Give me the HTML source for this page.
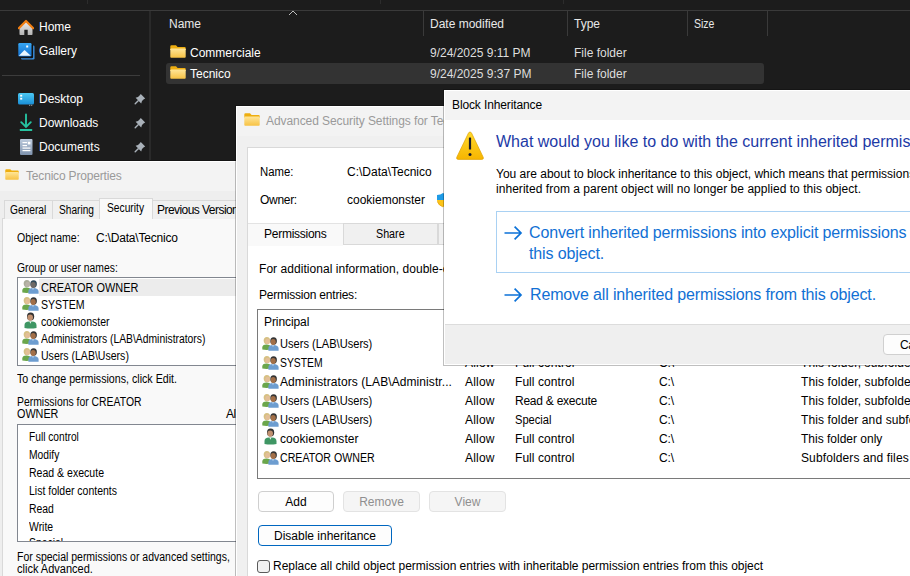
<!DOCTYPE html><html><head><meta charset="utf-8"><style>
html,body{margin:0;padding:0;width:910px;height:576px;overflow:hidden;background:#1c1c1c;}
body{position:relative;font-family:"Liberation Sans",sans-serif;}
.t{position:absolute;line-height:1;white-space:nowrap;}
</style></head><body>
<div style="position:absolute;left:0px;top:10px;width:910px;height:1px;background:#3a3a3a"></div>
<div style="position:absolute;left:87px;top:0px;width:1px;height:4px;background:#2c2c2c"></div>
<div style="position:absolute;left:380px;top:0px;width:1px;height:4px;background:#2c2c2c"></div>
<div style="position:absolute;left:563px;top:0px;width:1px;height:4px;background:#2c2c2c"></div>
<div style="position:absolute;left:149px;top:11px;width:2px;height:150px;background:#2a2a2a"></div>
<div class="t " style="left:39px;top:21px;font-size:12px;color:#ffffff;">Home</div>
<div class="t " style="left:39px;top:45px;font-size:12px;color:#ffffff;">Gallery</div>
<div style="position:absolute;left:2px;top:75px;width:138px;height:1px;background:#3c3c3c"></div>
<div class="t " style="left:39px;top:93px;font-size:12px;color:#ffffff;">Desktop</div>
<div class="t " style="left:39px;top:117px;font-size:12px;color:#ffffff;">Downloads</div>
<div class="t " style="left:39px;top:141px;font-size:12px;color:#ffffff;">Documents</div>
<svg style="position:absolute;left:18px;top:19px" width="16" height="17" viewBox="0 0 16 17" preserveAspectRatio="none"><defs><linearGradient id="hg" x1="0" y1="0" x2="0" y2="1"><stop offset="0" stop-color="#ececec"/><stop offset="1" stop-color="#b4b4b4"/></linearGradient></defs><path d="M1.5 8.5 L8 2.5 L14.5 8.5 V15.2 Q14.5 16 13.7 16 H9.7 V10.8 H6.3 V16 H2.3 Q1.5 16 1.5 15.2Z" fill="url(#hg)"/><path d="M0.8 9.2 L8 2 L15.2 9.2" stroke="#f07e12" stroke-width="2.2" fill="none" stroke-linejoin="round" stroke-linecap="round"/></svg>
<svg style="position:absolute;left:18px;top:42px" width="17" height="18" viewBox="0 0 17 18" preserveAspectRatio="none"><rect x="3" y="3.5" width="13.5" height="14" rx="1.2" fill="#3a8fe0"/><rect x="1.6" y="2.2" width="13.5" height="14" rx="1.2" fill="#111"/><defs><linearGradient id="gg" x1="0" y1="0" x2="0" y2="1"><stop offset="0" stop-color="#36a6f4"/><stop offset="1" stop-color="#1470d0"/></linearGradient></defs><rect x="0.3" y="1" width="13.2" height="13.4" rx="1.2" fill="url(#gg)"/><path d="M0.8 13.8 L6.5 8 L12.8 13.8Z" fill="#eaf6ff"/><rect x="8.2" y="3.5" width="2" height="2" fill="#fff"/></svg>
<svg style="position:absolute;left:18px;top:92px" width="17" height="14" viewBox="0 0 17 14" preserveAspectRatio="none"><defs><linearGradient id="dg" x1="0" y1="0" x2="0" y2="1"><stop offset="0" stop-color="#4cc8f2"/><stop offset="1" stop-color="#1a8ed6"/></linearGradient></defs><rect x="0" y="1" width="16" height="11.5" rx="1.5" fill="url(#dg)"/><rect x="2.2" y="2.8" width="2" height="1.8" fill="#fff"/><rect x="2.2" y="5.8" width="2" height="1.8" fill="#fff"/><rect x="11.2" y="12.8" width="1" height="1" fill="#bbb"/><rect x="13.2" y="12.8" width="1" height="1" fill="#bbb"/></svg>
<svg style="position:absolute;left:19px;top:113px" width="14" height="19" viewBox="0 0 14 19" preserveAspectRatio="none"><path d="M7 1.5 V14 M2.2 9.2 L7 14 L11.8 9.2" stroke="#26c2a0" stroke-width="1.9" fill="none" stroke-linecap="round"/><rect x="0.8" y="16" width="12.4" height="2" rx="0.6" fill="#26c2a0"/></svg>
<svg style="position:absolute;left:20px;top:139px" width="13" height="17" viewBox="0 0 13 17" preserveAspectRatio="none"><defs><linearGradient id="docg" x1="0" y1="0" x2="0" y2="1"><stop offset="0" stop-color="#bccbdd"/><stop offset="1" stop-color="#7f93ad"/></linearGradient></defs><rect x="0" y="0" width="12.5" height="16" rx="1" fill="url(#docg)"/><rect x="2.5" y="3" width="4.5" height="1.2" fill="#fff"/><rect x="7.8" y="2.8" width="2.6" height="2.6" fill="#fff"/><rect x="2.5" y="6" width="4.5" height="1.2" fill="#fff"/><rect x="2.5" y="8.5" width="7.9" height="1.2" fill="#fff"/><rect x="2.5" y="11" width="7.9" height="1.2" fill="#fff"/></svg>
<svg style="position:absolute;left:134px;top:93px" width="12" height="12" viewBox="0 0 12 12" preserveAspectRatio="none"><path d="M6.8 1 L11.2 5.4 L9.8 6.2 L8 8 L7.2 10.4 L1.6 4.8 L4 4 L5.8 2.2 Z" fill="#a9b1b9"/><path d="M4.2 7.8 L1.2 10.8" stroke="#a9b1b9" stroke-width="1.4" stroke-linecap="round"/></svg>
<svg style="position:absolute;left:134px;top:117px" width="12" height="12" viewBox="0 0 12 12" preserveAspectRatio="none"><path d="M6.8 1 L11.2 5.4 L9.8 6.2 L8 8 L7.2 10.4 L1.6 4.8 L4 4 L5.8 2.2 Z" fill="#a9b1b9"/><path d="M4.2 7.8 L1.2 10.8" stroke="#a9b1b9" stroke-width="1.4" stroke-linecap="round"/></svg>
<svg style="position:absolute;left:134px;top:141px" width="12" height="12" viewBox="0 0 12 12" preserveAspectRatio="none"><path d="M6.8 1 L11.2 5.4 L9.8 6.2 L8 8 L7.2 10.4 L1.6 4.8 L4 4 L5.8 2.2 Z" fill="#a9b1b9"/><path d="M4.2 7.8 L1.2 10.8" stroke="#a9b1b9" stroke-width="1.4" stroke-linecap="round"/></svg>
<div class="t " style="left:169px;top:18px;font-size:12px;color:#e8e8e8;">Name</div>
<svg style="position:absolute;left:288px;top:10px" width="10" height="6" viewBox="0 0 10 6" preserveAspectRatio="none"><path d="M1 5 L5 1 L9 5" stroke="#bdbdbd" stroke-width="1" fill="none"/></svg>
<div style="position:absolute;left:423px;top:11px;width:1px;height:25px;background:#3a3a3a"></div>
<div style="position:absolute;left:567px;top:11px;width:1px;height:25px;background:#3a3a3a"></div>
<div style="position:absolute;left:687px;top:11px;width:1px;height:25px;background:#3a3a3a"></div>
<div style="position:absolute;left:767px;top:11px;width:1px;height:25px;background:#3a3a3a"></div>
<div class="t " style="left:430px;top:18px;font-size:12px;color:#e8e8e8;">Date modified</div>
<div class="t " style="left:574px;top:18px;font-size:12px;color:#e8e8e8;">Type</div>
<div class="t " style="left:694px;top:18px;font-size:12px;color:#e8e8e8;transform:scaleX(0.8739);transform-origin:0 0;">Size</div>
<div style="position:absolute;left:166px;top:63px;width:598px;height:21px;background:#333333;border-radius:3px"></div>
<svg style="position:absolute;left:170px;top:45px" width="16" height="13" viewBox="0 0 16 13" preserveAspectRatio="none"><defs><linearGradient id="fg" x1="0" y1="0" x2="0" y2="1"><stop offset="0" stop-color="#ffe69a"/><stop offset="1" stop-color="#f7c244"/></linearGradient></defs><path d="M0.3 1.5 Q0.3 0.3 1.5 0.3 H6 L7.6 1.9 H14.6 Q15.7 1.9 15.7 3 V5 H0.3Z" fill="#eeae10"/><rect x="0.3" y="3.4" width="15.4" height="9.3" rx="0.9" fill="url(#fg)"/></svg>
<div class="t " style="left:190px;top:47px;font-size:12px;color:#ffffff;">Commerciale</div>
<div class="t " style="left:430px;top:47px;font-size:12px;color:#dedede;">9/24/2025 9:11 PM</div>
<div class="t " style="left:574px;top:47px;font-size:12px;color:#dedede;">File folder</div>
<svg style="position:absolute;left:170px;top:66px" width="16" height="13" viewBox="0 0 16 13" preserveAspectRatio="none"><defs><linearGradient id="fg" x1="0" y1="0" x2="0" y2="1"><stop offset="0" stop-color="#ffe69a"/><stop offset="1" stop-color="#f7c244"/></linearGradient></defs><path d="M0.3 1.5 Q0.3 0.3 1.5 0.3 H6 L7.6 1.9 H14.6 Q15.7 1.9 15.7 3 V5 H0.3Z" fill="#eeae10"/><rect x="0.3" y="3.4" width="15.4" height="9.3" rx="0.9" fill="url(#fg)"/></svg>
<div class="t " style="left:190px;top:68px;font-size:12px;color:#ffffff;">Tecnico</div>
<div class="t " style="left:430px;top:68px;font-size:12px;color:#dedede;">9/24/2025 9:37 PM</div>
<div class="t " style="left:574px;top:68px;font-size:12px;color:#dedede;">File folder</div>
<div style="position:absolute;left:0px;top:160px;width:236px;height:1px;background:#141414"></div>
<div style="position:absolute;left:0px;top:161px;width:236px;height:415px;background:#eeeeee;border-top:1px solid #fff;box-sizing:border-box"></div>
<div style="position:absolute;left:0px;top:162px;width:236px;height:29px;background:#f3f3f3"></div>
<svg style="position:absolute;left:5px;top:169px" width="14" height="11" viewBox="0 0 16 13" preserveAspectRatio="none"><defs><linearGradient id="fg" x1="0" y1="0" x2="0" y2="1"><stop offset="0" stop-color="#ffe69a"/><stop offset="1" stop-color="#f7c244"/></linearGradient></defs><path d="M0.3 1.5 Q0.3 0.3 1.5 0.3 H6 L7.6 1.9 H14.6 Q15.7 1.9 15.7 3 V5 H0.3Z" fill="#eeae10"/><rect x="0.3" y="3.4" width="15.4" height="9.3" rx="0.9" fill="url(#fg)"/></svg>
<div class="t " style="left:26px;top:170px;font-size:12px;color:#9a9a9a;letter-spacing:-0.178px;">Tecnico Properties</div>
<div style="position:absolute;left:2px;top:218px;width:240px;height:360px;background:#f9f9f9;border:1px solid #d9d9d9;box-sizing:border-box"></div>
<div style="position:absolute;left:4px;top:200px;width:49px;height:19px;background:#f0f0f0;border:1px solid #d9d9d9;border-bottom:none;box-sizing:border-box"></div>
<div style="position:absolute;left:52px;top:200px;width:48px;height:19px;background:#f0f0f0;border:1px solid #d9d9d9;border-bottom:none;box-sizing:border-box"></div>
<div style="position:absolute;left:152px;top:200px;width:90px;height:19px;background:#f0f0f0;border:1px solid #d9d9d9;border-bottom:none;box-sizing:border-box"></div>
<div style="position:absolute;left:99px;top:198px;width:54px;height:21px;background:#f9f9f9;border:1px solid #d9d9d9;border-bottom:none;box-sizing:border-box"></div>
<div class="t " style="left:10px;top:204px;font-size:12px;color:#000;transform:scaleX(0.8503);transform-origin:0 0;">General</div>
<div class="t " style="left:59px;top:204px;font-size:12px;color:#000;transform:scaleX(0.8438);transform-origin:0 0;">Sharing</div>
<div class="t " style="left:107px;top:202px;font-size:12px;color:#000;transform:scaleX(0.8536);transform-origin:0 0;">Security</div>
<div class="t " style="left:157px;top:204px;font-size:12px;color:#000;letter-spacing:-0.55px;">Previous Versions</div>
<div class="t " style="left:17px;top:232px;font-size:12px;color:#000;transform:scaleX(0.8772);transform-origin:0 0;">Object name:</div>
<div class="t " style="left:96px;top:232px;font-size:12px;color:#000;letter-spacing:-0.200px;">C:\Data\Tecnico</div>
<div class="t " style="left:17px;top:262px;font-size:12px;color:#000;transform:scaleX(0.8636);transform-origin:0 0;">Group or user names:</div>
<div style="position:absolute;left:17px;top:277px;width:230px;height:89px;background:#fff;border:1px solid #828790;box-sizing:border-box"></div>
<div style="position:absolute;left:39px;top:279px;width:200px;height:17px;background:#ececec"></div>
<svg style="position:absolute;left:22px;top:279px" width="17" height="15" viewBox="0 0 17 15" preserveAspectRatio="none"><ellipse cx="4.9" cy="4.6" rx="3.2" ry="3.6" fill="#a9ab9a"/><ellipse cx="5.6" cy="5.4" rx="2.3" ry="2.7" fill="#b9b3a8"/><path d="M0.3 13.6 V11.6 Q0.3 8.4 4.4 8.4 Q8.8 8.4 8.8 11.6 V13.6 Q4.5 14.2 0.3 13.6Z" fill="#6ba64b"/><ellipse cx="11.6" cy="4.9" rx="3.3" ry="3.7" fill="#2f4a5a"/><ellipse cx="11.2" cy="6" rx="2.6" ry="2.9" fill="#6f6a66"/><path d="M6.4 14.8 V12.2 Q6.4 9 11 9 Q16.6 9 16.6 12.6 V14.8Z" fill="#6d9dd0"/><path d="M10.2 9.2 L11 11 L11.8 9.2Z" fill="#e8f0f8"/></svg>
<div class="t " style="left:41px;top:282px;font-size:12px;color:#000;transform:scaleX(0.9103);transform-origin:0 0;">CREATOR OWNER</div>
<svg style="position:absolute;left:22px;top:296px" width="17" height="15" viewBox="0 0 17 15" preserveAspectRatio="none"><ellipse cx="4.9" cy="4.6" rx="3.2" ry="3.6" fill="#d6c083"/><ellipse cx="5.6" cy="5.4" rx="2.3" ry="2.7" fill="#e3bf98"/><path d="M0.3 13.6 V11.6 Q0.3 8.4 4.4 8.4 Q8.8 8.4 8.8 11.6 V13.6 Q4.5 14.2 0.3 13.6Z" fill="#6ba64b"/><ellipse cx="11.6" cy="4.9" rx="3.3" ry="3.7" fill="#353535"/><ellipse cx="11.2" cy="6" rx="2.6" ry="2.9" fill="#a26f48"/><path d="M6.4 14.8 V12.2 Q6.4 9 11 9 Q16.6 9 16.6 12.6 V14.8Z" fill="#6d9dd0"/><path d="M10.2 9.2 L11 11 L11.8 9.2Z" fill="#e8f0f8"/></svg>
<div class="t " style="left:41px;top:299px;font-size:12px;color:#000;transform:scaleX(0.8816);transform-origin:0 0;">SYSTEM</div>
<svg style="position:absolute;left:22px;top:312px" width="17" height="17" viewBox="0 0 17 17" preserveAspectRatio="none"><ellipse cx="8.6" cy="4.4" rx="3.6" ry="3.9" fill="#333"/><ellipse cx="8.2" cy="5.6" rx="2.8" ry="3.1" fill="#c09070"/><path d="M2.5 16 V13 Q2.5 9.6 7 9.4 H10 Q14.5 9.6 14.5 13.4 V16 Q8.5 17 2.5 16Z" fill="#3f9664"/><path d="M7.4 9.6 L8.4 11.8 L9.4 9.6Z" fill="#e8f4ec"/></svg>
<div class="t " style="left:41px;top:316px;font-size:12px;color:#000;transform:scaleX(0.8791);transform-origin:0 0;">cookiemonster</div>
<svg style="position:absolute;left:22px;top:330px" width="17" height="15" viewBox="0 0 17 15" preserveAspectRatio="none"><ellipse cx="4.9" cy="4.6" rx="3.2" ry="3.6" fill="#d6c083"/><ellipse cx="5.6" cy="5.4" rx="2.3" ry="2.7" fill="#e3bf98"/><path d="M0.3 13.6 V11.6 Q0.3 8.4 4.4 8.4 Q8.8 8.4 8.8 11.6 V13.6 Q4.5 14.2 0.3 13.6Z" fill="#6ba64b"/><ellipse cx="11.6" cy="4.9" rx="3.3" ry="3.7" fill="#353535"/><ellipse cx="11.2" cy="6" rx="2.6" ry="2.9" fill="#a26f48"/><path d="M6.4 14.8 V12.2 Q6.4 9 11 9 Q16.6 9 16.6 12.6 V14.8Z" fill="#6d9dd0"/><path d="M10.2 9.2 L11 11 L11.8 9.2Z" fill="#e8f0f8"/></svg>
<div class="t " style="left:41px;top:333px;font-size:12px;color:#000;transform:scaleX(0.8620);transform-origin:0 0;">Administrators (LAB\Administrators)</div>
<svg style="position:absolute;left:22px;top:347px" width="17" height="15" viewBox="0 0 17 15" preserveAspectRatio="none"><ellipse cx="4.9" cy="4.6" rx="3.2" ry="3.6" fill="#d6c083"/><ellipse cx="5.6" cy="5.4" rx="2.3" ry="2.7" fill="#e3bf98"/><path d="M0.3 13.6 V11.6 Q0.3 8.4 4.4 8.4 Q8.8 8.4 8.8 11.6 V13.6 Q4.5 14.2 0.3 13.6Z" fill="#6ba64b"/><ellipse cx="11.6" cy="4.9" rx="3.3" ry="3.7" fill="#353535"/><ellipse cx="11.2" cy="6" rx="2.6" ry="2.9" fill="#a26f48"/><path d="M6.4 14.8 V12.2 Q6.4 9 11 9 Q16.6 9 16.6 12.6 V14.8Z" fill="#6d9dd0"/><path d="M10.2 9.2 L11 11 L11.8 9.2Z" fill="#e8f0f8"/></svg>
<div class="t " style="left:41px;top:350px;font-size:12px;color:#000;transform:scaleX(0.8789);transform-origin:0 0;">Users (LAB\Users)</div>
<div class="t " style="left:17px;top:373px;font-size:12px;color:#000;transform:scaleX(0.8885);transform-origin:0 0;">To change permissions, click Edit.</div>
<div class="t " style="left:17px;top:396px;font-size:12px;color:#000;transform:scaleX(0.8671);transform-origin:0 0;">Permissions for CREATOR</div>
<div class="t " style="left:17px;top:408px;font-size:12px;color:#000;transform:scaleX(0.9001);transform-origin:0 0;">OWNER</div>
<div class="t " style="left:226px;top:408px;font-size:12px;color:#000;letter-spacing:-0.4px;">Allow</div>
<div style="position:absolute;left:17px;top:424px;width:230px;height:118px;background:#fff;border:1px solid #828790;box-sizing:border-box"></div>
<div style="position:absolute;left:0;top:0;width:910px;height:576px;clip-path:inset(425px 0 35px 18px)">
<div class="t " style="left:29px;top:431px;font-size:12px;color:#000;transform:scaleX(0.8486);transform-origin:0 0;">Full control</div>
<div class="t " style="left:29px;top:449px;font-size:12px;color:#000;transform:scaleX(0.8573);transform-origin:0 0;">Modify</div>
<div class="t " style="left:29px;top:467px;font-size:12px;color:#000;transform:scaleX(0.8783);transform-origin:0 0;">Read &amp; execute</div>
<div class="t " style="left:29px;top:485px;font-size:12px;color:#000;transform:scaleX(0.8737);transform-origin:0 0;">List folder contents</div>
<div class="t " style="left:29px;top:503px;font-size:12px;color:#000;transform:scaleX(0.8680);transform-origin:0 0;">Read</div>
<div class="t " style="left:29px;top:521px;font-size:12px;color:#000;transform:scaleX(0.8676);transform-origin:0 0;">Write</div>
<div class="t " style="left:29px;top:537px;font-size:12px;color:#000;transform:scaleX(0.8639);transform-origin:0 0;">Special</div>
</div>
<div class="t " style="left:17px;top:551px;font-size:12px;color:#000;transform:scaleX(0.8741);transform-origin:0 0;">For special permissions or advanced settings,</div>
<div class="t " style="left:17px;top:563px;font-size:12px;color:#000;transform:scaleX(0.9176);transform-origin:0 0;">click Advanced.</div>
<div style="position:absolute;left:235px;top:105px;width:700px;height:480px;background:#f0f0f0;border-left:1px solid rgba(0,0,0,0.25);border-top:1px solid rgba(0,0,0,0.25);box-sizing:border-box;background-clip:padding-box"></div>
<div style="position:absolute;left:236px;top:106px;width:700px;height:480px;background:#f0f0f0;border-left:1px solid #fff;border-top:1px solid #fff;box-sizing:border-box"></div>
<div style="position:absolute;left:237px;top:107px;width:700px;height:29px;background:#f3f3f3"></div>
<svg style="position:absolute;left:244px;top:113px" width="16" height="13" viewBox="0 0 16 13" preserveAspectRatio="none"><defs><linearGradient id="fg" x1="0" y1="0" x2="0" y2="1"><stop offset="0" stop-color="#ffe69a"/><stop offset="1" stop-color="#f7c244"/></linearGradient></defs><path d="M0.3 1.5 Q0.3 0.3 1.5 0.3 H6 L7.6 1.9 H14.6 Q15.7 1.9 15.7 3 V5 H0.3Z" fill="#eeae10"/><rect x="0.3" y="3.4" width="15.4" height="9.3" rx="0.9" fill="url(#fg)"/></svg>
<div class="t " style="left:266px;top:115px;font-size:12px;color:#9a9a9a;letter-spacing:-0.08px;">Advanced Security Settings for Tecnico</div>
<div style="position:absolute;left:247px;top:147px;width:700px;height:440px;background:#fff;border:1px solid #d9d9d9;box-sizing:border-box"></div>
<div class="t " style="left:260px;top:166px;font-size:12px;color:#000;transform:scaleX(0.9450);transform-origin:0 0;">Name:</div>
<div class="t " style="left:347px;top:166px;font-size:12px;color:#000;">C:\Data\Tecnico</div>
<div class="t " style="left:260px;top:194px;font-size:12px;color:#000;letter-spacing:-0.296px;">Owner:</div>
<div class="t " style="left:347px;top:194px;font-size:12px;color:#000;">cookiemonster</div>
<svg style="position:absolute;left:437px;top:192px" width="12" height="16" viewBox="0 0 12 16" preserveAspectRatio="none"><path d="M0 3 Q3.5 3 6 1 Q8.5 3 12 3 V8 H0Z" fill="#1f9be6"/><path d="M0 8 H12 Q12 13 6 15 Q0 13 0 8Z" fill="#fcc419"/><path d="M6 15 Q2 13.5 0.3 9.5" stroke="#e09a10" stroke-width="0.6" fill="none"/></svg>
<div style="position:absolute;left:248px;top:244px;width:700px;height:1px;background:#d9d9d9"></div>
<div style="position:absolute;left:343px;top:223px;width:95px;height:22px;background:#f0f0f0;border:1px solid #d9d9d9;box-sizing:border-box"></div>
<div style="position:absolute;left:438px;top:223px;width:95px;height:22px;background:#f0f0f0;border:1px solid #d9d9d9;box-sizing:border-box"></div>
<div style="position:absolute;left:248px;top:223px;width:95px;height:22px;background:#f9f9f9;border-top:1px solid #e3e3e3"></div>
<div class="t " style="left:264px;top:228px;font-size:12px;color:#000;letter-spacing:-0.259px;">Permissions</div>
<div class="t " style="left:376px;top:228px;font-size:12px;color:#000;transform:scaleX(0.8932);transform-origin:0 0;">Share</div>
<div class="t " style="left:259px;top:263px;font-size:12px;color:#000;letter-spacing:0.05px;">For additional information, double-click a permission entry.</div>
<div class="t " style="left:259px;top:289px;font-size:12px;color:#000;letter-spacing:-0.212px;">Permission entries:</div>
<div style="position:absolute;left:257px;top:309px;width:700px;height:170px;background:#fff;border:1px solid #7a7a7a;box-sizing:border-box"></div>
<div class="t " style="left:264px;top:316px;font-size:12px;color:#000;letter-spacing:-0.091px;">Principal</div>
<svg style="position:absolute;left:262px;top:336px" width="17" height="15" viewBox="0 0 17 15" preserveAspectRatio="none"><ellipse cx="4.9" cy="4.6" rx="3.2" ry="3.6" fill="#d6c083"/><ellipse cx="5.6" cy="5.4" rx="2.3" ry="2.7" fill="#e3bf98"/><path d="M0.3 13.6 V11.6 Q0.3 8.4 4.4 8.4 Q8.8 8.4 8.8 11.6 V13.6 Q4.5 14.2 0.3 13.6Z" fill="#6ba64b"/><ellipse cx="11.6" cy="4.9" rx="3.3" ry="3.7" fill="#353535"/><ellipse cx="11.2" cy="6" rx="2.6" ry="2.9" fill="#a26f48"/><path d="M6.4 14.8 V12.2 Q6.4 9 11 9 Q16.6 9 16.6 12.6 V14.8Z" fill="#6d9dd0"/><path d="M10.2 9.2 L11 11 L11.8 9.2Z" fill="#e8f0f8"/></svg>
<div class="t " style="left:280px;top:338px;font-size:12px;color:#000;transform:scaleX(0.9229);transform-origin:0 0;">Users (LAB\Users)</div>
<div class="t " style="left:465px;top:338px;font-size:12px;color:#000;letter-spacing:0.205px;">Allow</div>
<div class="t " style="left:515px;top:338px;font-size:12px;color:#000;letter-spacing:0.059px;">Full control</div>
<div class="t " style="left:659px;top:338px;font-size:12px;color:#000;letter-spacing:-0.078px;">C:\</div>
<div class="t " style="left:801px;top:338px;font-size:12px;color:#000;letter-spacing:0.12px;">This folder, subfolders and files</div>
<svg style="position:absolute;left:262px;top:355px" width="17" height="15" viewBox="0 0 17 15" preserveAspectRatio="none"><ellipse cx="4.9" cy="4.6" rx="3.2" ry="3.6" fill="#d6c083"/><ellipse cx="5.6" cy="5.4" rx="2.3" ry="2.7" fill="#e3bf98"/><path d="M0.3 13.6 V11.6 Q0.3 8.4 4.4 8.4 Q8.8 8.4 8.8 11.6 V13.6 Q4.5 14.2 0.3 13.6Z" fill="#6ba64b"/><ellipse cx="11.6" cy="4.9" rx="3.3" ry="3.7" fill="#353535"/><ellipse cx="11.2" cy="6" rx="2.6" ry="2.9" fill="#a26f48"/><path d="M6.4 14.8 V12.2 Q6.4 9 11 9 Q16.6 9 16.6 12.6 V14.8Z" fill="#6d9dd0"/><path d="M10.2 9.2 L11 11 L11.8 9.2Z" fill="#e8f0f8"/></svg>
<div class="t " style="left:280px;top:357px;font-size:12px;color:#000;transform:scaleX(0.8654);transform-origin:0 0;">SYSTEM</div>
<div class="t " style="left:465px;top:357px;font-size:12px;color:#000;letter-spacing:0.205px;">Allow</div>
<div class="t " style="left:515px;top:357px;font-size:12px;color:#000;letter-spacing:0.059px;">Full control</div>
<div class="t " style="left:659px;top:357px;font-size:12px;color:#000;letter-spacing:-0.078px;">C:\</div>
<div class="t " style="left:801px;top:357px;font-size:12px;color:#000;letter-spacing:0.12px;">This folder, subfolders and files</div>
<svg style="position:absolute;left:262px;top:374px" width="17" height="15" viewBox="0 0 17 15" preserveAspectRatio="none"><ellipse cx="4.9" cy="4.6" rx="3.2" ry="3.6" fill="#d6c083"/><ellipse cx="5.6" cy="5.4" rx="2.3" ry="2.7" fill="#e3bf98"/><path d="M0.3 13.6 V11.6 Q0.3 8.4 4.4 8.4 Q8.8 8.4 8.8 11.6 V13.6 Q4.5 14.2 0.3 13.6Z" fill="#6ba64b"/><ellipse cx="11.6" cy="4.9" rx="3.3" ry="3.7" fill="#353535"/><ellipse cx="11.2" cy="6" rx="2.6" ry="2.9" fill="#a26f48"/><path d="M6.4 14.8 V12.2 Q6.4 9 11 9 Q16.6 9 16.6 12.6 V14.8Z" fill="#6d9dd0"/><path d="M10.2 9.2 L11 11 L11.8 9.2Z" fill="#e8f0f8"/></svg>
<div class="t " style="left:280px;top:376px;font-size:12px;color:#000;letter-spacing:0.082px;">Administrators (LAB\Administr...</div>
<div class="t " style="left:465px;top:376px;font-size:12px;color:#000;letter-spacing:0.205px;">Allow</div>
<div class="t " style="left:515px;top:376px;font-size:12px;color:#000;letter-spacing:0.059px;">Full control</div>
<div class="t " style="left:659px;top:376px;font-size:12px;color:#000;letter-spacing:-0.078px;">C:\</div>
<div class="t " style="left:801px;top:376px;font-size:12px;color:#000;letter-spacing:0.12px;">This folder, subfolders and files</div>
<svg style="position:absolute;left:262px;top:393px" width="17" height="15" viewBox="0 0 17 15" preserveAspectRatio="none"><ellipse cx="4.9" cy="4.6" rx="3.2" ry="3.6" fill="#d6c083"/><ellipse cx="5.6" cy="5.4" rx="2.3" ry="2.7" fill="#e3bf98"/><path d="M0.3 13.6 V11.6 Q0.3 8.4 4.4 8.4 Q8.8 8.4 8.8 11.6 V13.6 Q4.5 14.2 0.3 13.6Z" fill="#6ba64b"/><ellipse cx="11.6" cy="4.9" rx="3.3" ry="3.7" fill="#353535"/><ellipse cx="11.2" cy="6" rx="2.6" ry="2.9" fill="#a26f48"/><path d="M6.4 14.8 V12.2 Q6.4 9 11 9 Q16.6 9 16.6 12.6 V14.8Z" fill="#6d9dd0"/><path d="M10.2 9.2 L11 11 L11.8 9.2Z" fill="#e8f0f8"/></svg>
<div class="t " style="left:280px;top:395px;font-size:12px;color:#000;transform:scaleX(0.9229);transform-origin:0 0;">Users (LAB\Users)</div>
<div class="t " style="left:465px;top:395px;font-size:12px;color:#000;letter-spacing:0.205px;">Allow</div>
<div class="t " style="left:515px;top:395px;font-size:12px;color:#000;letter-spacing:-0.242px;">Read &amp; execute</div>
<div class="t " style="left:659px;top:395px;font-size:12px;color:#000;letter-spacing:-0.078px;">C:\</div>
<div class="t " style="left:801px;top:395px;font-size:12px;color:#000;letter-spacing:0.12px;">This folder, subfolders and files</div>
<svg style="position:absolute;left:262px;top:412px" width="17" height="15" viewBox="0 0 17 15" preserveAspectRatio="none"><ellipse cx="4.9" cy="4.6" rx="3.2" ry="3.6" fill="#d6c083"/><ellipse cx="5.6" cy="5.4" rx="2.3" ry="2.7" fill="#e3bf98"/><path d="M0.3 13.6 V11.6 Q0.3 8.4 4.4 8.4 Q8.8 8.4 8.8 11.6 V13.6 Q4.5 14.2 0.3 13.6Z" fill="#6ba64b"/><ellipse cx="11.6" cy="4.9" rx="3.3" ry="3.7" fill="#353535"/><ellipse cx="11.2" cy="6" rx="2.6" ry="2.9" fill="#a26f48"/><path d="M6.4 14.8 V12.2 Q6.4 9 11 9 Q16.6 9 16.6 12.6 V14.8Z" fill="#6d9dd0"/><path d="M10.2 9.2 L11 11 L11.8 9.2Z" fill="#e8f0f8"/></svg>
<div class="t " style="left:280px;top:414px;font-size:12px;color:#000;transform:scaleX(0.9229);transform-origin:0 0;">Users (LAB\Users)</div>
<div class="t " style="left:465px;top:414px;font-size:12px;color:#000;letter-spacing:0.205px;">Allow</div>
<div class="t " style="left:515px;top:414px;font-size:12px;color:#000;transform:scaleX(0.9274);transform-origin:0 0;">Special</div>
<div class="t " style="left:659px;top:414px;font-size:12px;color:#000;letter-spacing:-0.078px;">C:\</div>
<div class="t " style="left:801px;top:414px;font-size:12px;color:#000;letter-spacing:0.12px;">This folder and subfolders</div>
<svg style="position:absolute;left:262px;top:428px" width="17" height="17" viewBox="0 0 17 17" preserveAspectRatio="none"><ellipse cx="8.6" cy="4.4" rx="3.6" ry="3.9" fill="#333"/><ellipse cx="8.2" cy="5.6" rx="2.8" ry="3.1" fill="#c09070"/><path d="M2.5 16 V13 Q2.5 9.6 7 9.4 H10 Q14.5 9.6 14.5 13.4 V16 Q8.5 17 2.5 16Z" fill="#3f9664"/><path d="M7.4 9.6 L8.4 11.8 L9.4 9.6Z" fill="#e8f4ec"/></svg>
<div class="t " style="left:280px;top:433px;font-size:12px;color:#000;letter-spacing:0.036px;">cookiemonster</div>
<div class="t " style="left:465px;top:433px;font-size:12px;color:#000;letter-spacing:0.205px;">Allow</div>
<div class="t " style="left:515px;top:433px;font-size:12px;color:#000;letter-spacing:0.059px;">Full control</div>
<div class="t " style="left:659px;top:433px;font-size:12px;color:#000;letter-spacing:-0.078px;">C:\</div>
<div class="t " style="left:801px;top:433px;font-size:12px;color:#000;letter-spacing:0px;">This folder only</div>
<svg style="position:absolute;left:262px;top:450px" width="17" height="15" viewBox="0 0 17 15" preserveAspectRatio="none"><ellipse cx="4.9" cy="4.6" rx="3.2" ry="3.6" fill="#d6c083"/><ellipse cx="5.6" cy="5.4" rx="2.3" ry="2.7" fill="#e3bf98"/><path d="M0.3 13.6 V11.6 Q0.3 8.4 4.4 8.4 Q8.8 8.4 8.8 11.6 V13.6 Q4.5 14.2 0.3 13.6Z" fill="#6ba64b"/><ellipse cx="11.6" cy="4.9" rx="3.3" ry="3.7" fill="#353535"/><ellipse cx="11.2" cy="6" rx="2.6" ry="2.9" fill="#a26f48"/><path d="M6.4 14.8 V12.2 Q6.4 9 11 9 Q16.6 9 16.6 12.6 V14.8Z" fill="#6d9dd0"/><path d="M10.2 9.2 L11 11 L11.8 9.2Z" fill="#e8f0f8"/></svg>
<div class="t " style="left:280px;top:452px;font-size:12px;color:#000;transform:scaleX(0.8859);transform-origin:0 0;">CREATOR OWNER</div>
<div class="t " style="left:465px;top:452px;font-size:12px;color:#000;letter-spacing:0.205px;">Allow</div>
<div class="t " style="left:515px;top:452px;font-size:12px;color:#000;letter-spacing:0.059px;">Full control</div>
<div class="t " style="left:659px;top:452px;font-size:12px;color:#000;letter-spacing:-0.078px;">C:\</div>
<div class="t " style="left:801px;top:452px;font-size:12px;color:#000;letter-spacing:0.12px;">Subfolders and files only</div>
<div style="position:absolute;left:258px;top:491px;width:76px;height:21px;background:#fdfdfd;border:1px solid #cfcfcf;border-radius:4px;box-sizing:border-box"></div>
<div class="t" style="left:258px;top:491px;width:76px;height:21px;line-height:23px;text-align:center;font-size:12px;color:#000">Add</div>
<div style="position:absolute;left:343px;top:491px;width:77px;height:21px;background:#f5f5f5;border:1px solid #e3e3e3;border-radius:4px;box-sizing:border-box"></div>
<div class="t" style="left:343px;top:491px;width:77px;height:21px;line-height:23px;text-align:center;font-size:12px;color:#8f8f8f">Remove</div>
<div style="position:absolute;left:429px;top:491px;width:77px;height:21px;background:#f5f5f5;border:1px solid #e3e3e3;border-radius:4px;box-sizing:border-box"></div>
<div class="t" style="left:429px;top:491px;width:77px;height:21px;line-height:23px;text-align:center;font-size:12px;color:#8f8f8f">View</div>
<div style="position:absolute;left:258px;top:525px;width:134px;height:21px;background:#fdfdfd;border:1px solid #0067c0;border-radius:4px;box-sizing:border-box"></div>
<div class="t" style="left:258px;top:525px;width:134px;height:21px;line-height:23px;text-align:center;font-size:12px;color:#000">Disable inheritance</div>
<div style="position:absolute;left:257px;top:560px;width:13px;height:13px;background:#f2f2f2;border:1px solid #5a5a5a;border-radius:3px;box-sizing:border-box"></div>
<div class="t " style="left:273px;top:560px;font-size:12px;color:#000;letter-spacing:-0.023px;">Replace all child object permission entries with inheritable permission entries from this object</div>
<div style="position:absolute;left:443px;top:89px;width:480px;height:277px;background:#fff;border-left:1px solid rgba(0,0,0,0.25);border-bottom:1px solid rgba(0,0,0,0.25);border-top:1px solid rgba(0,0,0,0.25);box-sizing:border-box;background-clip:padding-box"></div>
<div style="position:absolute;left:444px;top:90px;width:480px;height:275px;background:#fff;border-left:1px solid #fff;border-top:1px solid #fff;box-sizing:border-box"></div>
<div style="position:absolute;left:445px;top:91px;width:480px;height:29px;background:#f3f3f3"></div>
<div class="t " style="left:452px;top:99px;font-size:12px;color:#000;letter-spacing:-0.121px;">Block Inheritance</div>
<svg style="position:absolute;left:455px;top:131px" width="30" height="30" viewBox="0 0 30 30" preserveAspectRatio="none"><defs><linearGradient id="wg" x1="0" y1="0" x2="0" y2="1"><stop offset="0" stop-color="#ffd92e"/><stop offset="1" stop-color="#f7b500"/></linearGradient></defs><path d="M15 1 Q15.9 1 16.5 2 L28.2 26.2 Q28.9 28.4 26.8 28.4 H3.2 Q1.1 28.4 1.8 26.2 L13.5 2 Q14.1 1 15 1Z" fill="url(#wg)" stroke="#e0a000" stroke-width="0.7"/><rect x="13.9" y="6.6" width="2.2" height="12" rx="0.4" fill="#1a1a2a"/><circle cx="15" cy="23.4" r="1.5" fill="#1a1a2a"/></svg>
<div class="t " style="left:496px;top:134px;font-size:16px;color:#1d3aa6;">What would you like to do with the current inherited permissions?</div>
<div class="t " style="left:496px;top:168px;font-size:12px;color:#000;">You are about to block inheritance to this object, which means that permissions</div>
<div class="t " style="left:496px;top:183px;font-size:12px;color:#000;letter-spacing:0.039px;">inherited from a parent object will no longer be applied to this object.</div>
<div style="position:absolute;left:496px;top:211px;width:430px;height:62px;border:1px solid #a9d1f3;box-sizing:border-box"></div>
<svg style="position:absolute;left:504px;top:224px" width="19" height="18" viewBox="0 0 19 18" preserveAspectRatio="none"><path d="M0.5 9 H17 M10.6 2.6 L17 9 L10.6 15.4" stroke="#0c72d8" stroke-width="1.7" fill="none"/></svg>
<div class="t " style="left:529px;top:225px;font-size:16px;color:#1170d4;letter-spacing:-0.14px;">Convert inherited permissions into explicit permissions on</div>
<div class="t " style="left:529px;top:246px;font-size:16px;color:#1170d4;letter-spacing:-0.12px;">this object.</div>
<svg style="position:absolute;left:504px;top:286px" width="19" height="18" viewBox="0 0 19 18" preserveAspectRatio="none"><path d="M0.5 9 H17 M10.6 2.6 L17 9 L10.6 15.4" stroke="#0c72d8" stroke-width="1.7" fill="none"/></svg>
<div class="t " style="left:530px;top:287px;font-size:16px;color:#1170d4;letter-spacing:-0.141px;">Remove all inherited permissions from this object.</div>
<div style="position:absolute;left:445px;top:324px;width:480px;height:40px;background:#efefef;border-top:1px solid #dcdcdc;box-sizing:border-box"></div>
<div style="position:absolute;left:883px;top:334px;width:80px;height:21px;background:#fdfdfd;border:1px solid #d0d0d0;border-radius:4px;box-sizing:border-box"></div>
<div class="t " style="left:900px;top:339px;font-size:12px;color:#000;letter-spacing:-0.3px;">Cancel</div>
</body></html>
